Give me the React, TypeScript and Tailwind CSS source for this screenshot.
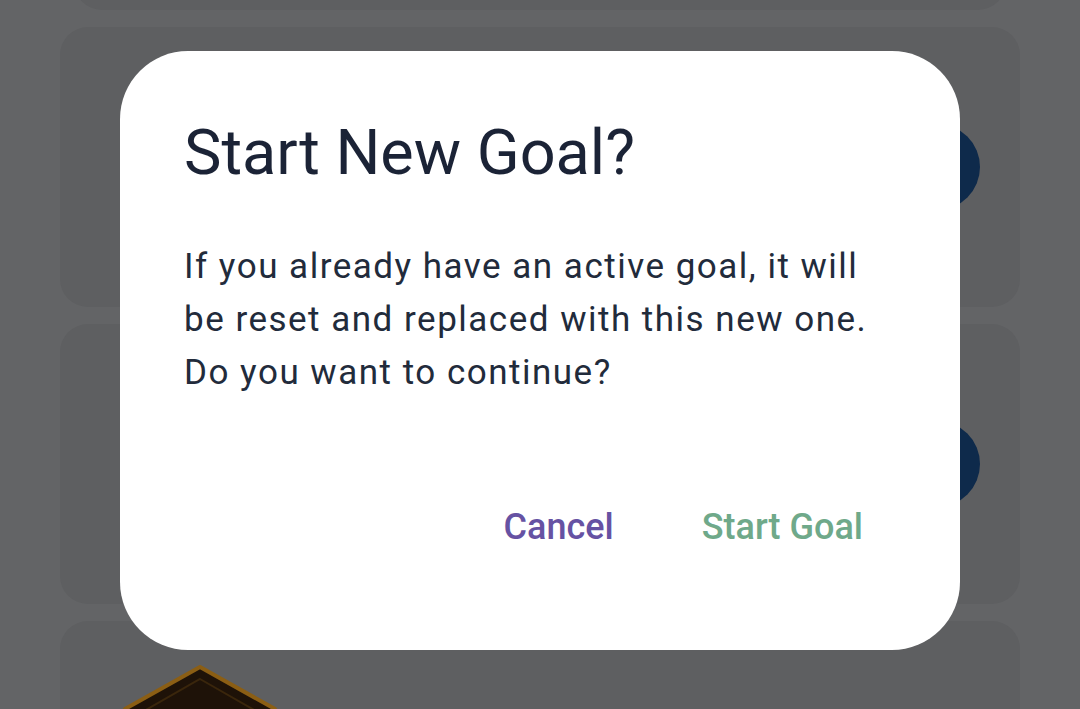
import React from "react";

function Card({ className, children }: { className: string; children?: React.ReactNode }) {
  return <div className={`relative rounded-[28px] bg-[#5e5f61] ${className}`}>{children}</div>;
}

export default function App() {
  return (
    <div
      className="relative w-[1080px] h-[709px] overflow-hidden bg-[#636466]"
      style={{ fontFamily: "Roboto, 'Noto Sans', sans-serif" }}
    >
      {/* background list */}
      <div className="flex flex-col gap-[17px] px-[60px] -mt-[270px]">
        <Card className="h-[280px] mx-[14px]" />
        <Card className="h-[280px] flex items-center justify-end pr-[40px]">
          <div className="w-[86px] h-[86px] rounded-full bg-[#0e2a4b]" />
        </Card>
        <Card className="h-[280px] flex items-center justify-end pr-[40px]">
          <div className="w-[86px] h-[86px] rounded-full bg-[#0e2a4b]" />
        </Card>
        <Card className="h-[280px] pl-[62px] pt-[44px]">
          <svg width="156" height="120" viewBox="0 0 156 120">
            <polygon points="78,2 153,44 153,130 3,130 3,44" fill="#1e1208" stroke="#8b5e14" strokeWidth="4" strokeLinejoin="round" />
            <polygon points="78,14 141,50 141,130 15,130 15,50" fill="none" stroke="#3a260c" strokeWidth="2" />
          </svg>
        </Card>
      </div>

      {/* dialog */}
      <div className="absolute left-[120px] top-[51px] w-[840px] h-[599px] rounded-[68px] bg-white pt-[65px] px-16 pb-[87px] flex flex-col">
        <h2 className="text-[63px] leading-[74px] text-[#1b2336] font-normal">Start New Goal?</h2>
        <p className="mt-[50px] text-[35px] leading-[53px] tracking-[1.5px] text-[#222b3b]">
          If you already have an active goal, it will be reset and replaced with this new one. Do you want to continue?
        </p>
        <div className="mt-auto flex justify-end gap-[22px]">
          <button className="h-[72px] px-[33px] flex items-center text-[36px] font-medium text-[#6652a3]">Cancel</button>
          <button className="h-[72px] px-[33px] flex items-center text-[36px] font-medium text-[#6fa98a]">Start Goal</button>
        </div>
      </div>
    </div>
  );
}
